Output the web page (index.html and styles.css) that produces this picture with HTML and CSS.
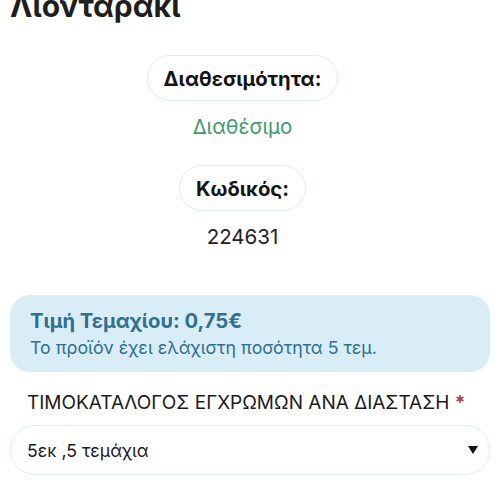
FILE: index.html
```html
<!DOCTYPE html>
<html lang="el">
<head>
<meta charset="utf-8">
<link rel="stylesheet" href="styles.css">
</head>
<body>
<div class="page">
  <h1 class="title">Λιονταράκι</h1>
  <div class="info">
    <div class="pill">Διαθεσιμότητα:</div>
    <div class="value green">Διαθέσιμο</div>
    <div class="pill">Κωδικός:</div>
    <div class="value">224631</div>
  </div>
  <div class="price-box">
    <div class="price">Τιμή Τεμαχίου: 0,75€</div>
    <div class="min">Το προϊόν έχει ελάχιστη ποσότητα 5 τεμ.</div>
  </div>
  <div class="field">
    <div class="label">ΤΙΜΟΚΑΤΑΛΟΓΟΣ ΕΓΧΡΩΜΩΝ ΑΝΑ ΔΙΑΣΤΑΣΗ <span class="req">*</span></div>
    <div class="select">
      <span>5εκ ,5 τεμάχια</span>
      <svg class="caret" width="10" height="8" viewBox="0 0 10 8"><path d="M0 0H10L5 8Z" fill="#111"/></svg>
    </div>
  </div>
</div>
</body>
</html>
```
FILE: styles.css
```css
html, body {
  margin: 0;
  padding: 0;
  background: #fff;
}
body {
  font-family: Inter, "Noto Sans", "DejaVu Sans", sans-serif;
  color: #222;
}
.page {
  padding: 0 10px;
}
.title {
  margin: -13px 0 0 0;
  font-size: 30px;
  line-height: 38px;
  font-weight: 700;
  color: #1e1e1e;
}
.info {
  display: flex;
  flex-direction: column;
  align-items: center;
  margin-top: 30px;
  padding-right: 15px;
}
.pill {
  border: 1.5px solid #dcefeb;
  border-radius: 24px;
  height: 44px;
  padding: 0 16px;
  display: flex;
  align-items: center;
  font-size: 20.3px;
  font-weight: 700;
  color: #141414;
}
.value {
  font-size: 20.5px;
  line-height: 24px;
  margin: 14px 0 26px;
}
.value.green {
  color: #3f9a6e;
}
.price-box {
  margin-top: 20px;
  background: #d9edf7;
  border-radius: 20px;
  padding: 12px 20px 11px;
  color: #31708f;
}
.price {
  font-size: 20.2px;
  font-weight: 700;
  line-height: 27px;
}
.min {
  font-size: 17.8px;
  line-height: 27px;
}
.field {
  margin-top: 20px;
}
.label {
  font-size: 19px;
  line-height: 22px;
  padding-left: 17px;
  color: #1c1c1c;
}
.req {
  color: #a94442;
  font-weight: 700;
}
.select {
  margin-top: 11px;
  height: 48px;
  border: 1.5px solid #dcefeb;
  border-radius: 26px;
  display: flex;
  align-items: center;
  justify-content: space-between;
  padding: 0 11px 0 16px;
  font-size: 17.7px;
  color: #1c1c1c;
}
.caret {
  display: block;
}
```
